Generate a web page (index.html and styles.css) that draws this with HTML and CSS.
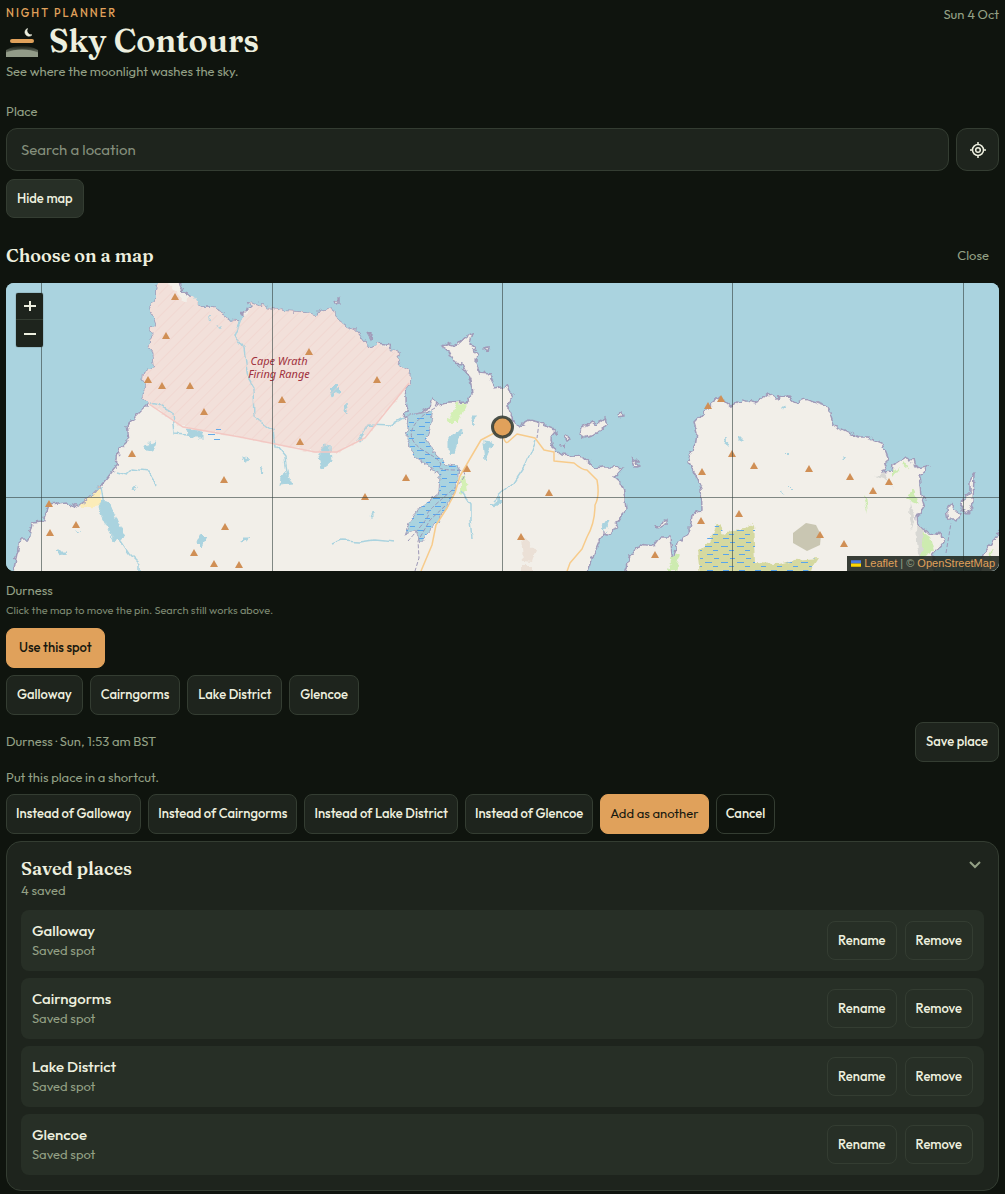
FILE: index.html
```html
<!DOCTYPE html>
<html lang="en">
<head>
<meta charset="utf-8">
<meta name="viewport" content="width=device-width, initial-scale=1">
<title>Sky Contours</title>
<link rel="stylesheet" href="styles.css">
</head>
<body>
<main class="page">
  <header class="top">
    <div>
      <p class="eyebrow">Night planner</p>
      <div class="brand">
        <svg class="logo" viewBox="0 0 32 32" aria-hidden="true">
          <defs>
            <linearGradient id="haze" x1="0" y1="0" x2="0" y2="1">
              <stop offset="0" stop-color="#929b88" stop-opacity="0"/>
              <stop offset="1" stop-color="#929b88" stop-opacity=".9"/>
            </linearGradient>
          </defs>
          <path d="M21.500 3.500a4 4 0 1 0 4.500 6.300a4.300 4.300 0 0 1-4.500-6.300z" fill="#edefdf" stroke="#edefdf" stroke-width=".6"/>
          <rect x="4" y="14" width="24" height="4" rx="2" fill="#e0a15b"/>
          <path d="M0 25Q8 20.500 16 20.500T32 25V29H0z" fill="url(#haze)"/>
          <path d="M0 27.500Q7 24.500 16 24.500T32 27.500V32H0z" fill="#929b88"/>
        </svg>
        <h1>Sky Contours</h1>
      </div>
      <p class="text tagline">See where the moonlight washes the sky.</p>
    </div>
    <time class="text" datetime="10-04">Sun 4 Oct</time>
  </header>

  <section class="place">
    <label class="text" for="search">Place</label>
    <div class="search">
      <input id="search" type="search" placeholder="Search a location">
      <button class="locate" type="button" aria-label="Use my location">
        <svg viewBox="0 0 18 18" fill="none" stroke="#edefdf" stroke-width="1.500" aria-hidden="true">
          <circle cx="9" cy="9" r="5.500"/><circle cx="9" cy="9" r="2.300"/>
          <path d="M9 1v2.500M9 14.500V17M1 9h2.500M14.500 9H17"/>
        </svg>
      </button>
    </div>
    <button class="btn raised" type="button">Hide map</button>
  </section>

  <section class="picker">
    <div class="picker-head">
      <h2>Choose on a map</h2>
      <button class="close text" type="button">Close</button>
    </div>
    <div class="map">
      <svg class="tiles" viewBox="6 283 993 288" preserveAspectRatio="xMidYMid slice" role="img" aria-label="Map around Durness">
        <defs>
          <filter id="rough" x="-2%" y="-2%" width="104%" height="104%">
            <feTurbulence type="fractalNoise" baseFrequency=".16" numOctaves="2" seed="4"/>
            <feDisplacementMap in="SourceGraphic" scale="7" xChannelSelector="R" yChannelSelector="G"/>
          </filter>
          <filter id="wavy" x="-2%" y="-2%" width="104%" height="104%">
            <feTurbulence type="fractalNoise" baseFrequency=".08" numOctaves="1" seed="9"/>
            <feDisplacementMap in="SourceGraphic" scale="9" xChannelSelector="R" yChannelSelector="G"/>
          </filter>
          <pattern id="hatch" width="8" height="8" patternUnits="userSpaceOnUse" patternTransform="rotate(45)">
            <path d="M0 0V8" stroke="#f0cfc9" stroke-width="1"/>
          </pattern>
          <pattern id="marsh" width="16" height="16" patternUnits="userSpaceOnUse">
            <path d="M1 2.500h7M9 6.500h5M3 10.500h6M10 14.500h5" stroke="#58a5ed" stroke-width="1"/>
          </pattern>
          <path id="peak" d="M0-4L4 3H-4z" fill="#d08f55"/>
        </defs>
        <rect x="6" y="283" width="993" height="288" fill="#aad3df"/>
        <g filter="url(#rough)">
          <g fill="#f2efe9" stroke="#a09bb9" stroke-width="1.500">
            <path d="M14 580L14 571 16 558 20 540 28 540 32 523 43 522 49 505 67 503 77 507 90 497 103 483 116 467 118 450 129 440 127 425 135 417 149 403 142 398 147 387 143 380 144 372 155 368 153 352 149 347 153 338 150 330 156 325 150 307 156 298 156 290 160 276H178L180 285 183 292 190 295 200 307 213 307 223 312 227 320 240 321 247 318 242 313 252 307 250 302 265 307 283 311 300 312 317 315 320 311 332 308 338 320 347 327 355 330 370 349 377 347 377 343 385 344 393 350 400 355 395 358 403 367 410 372 409 383 405 390 407 408 404 418 420 413 430 407 433 398 437 405 448 403 467 402 472 393 470 380 462 363 453 362 447 350 442 346 450 343 457 345 467 336 473 333 470 343 477 353 476 363 480 373 490 374 495 388 507 386 512 395 507 407 513 420 518 427 530 420 538 422 553 428 556 432 551 438 553 448 562 455 583 457 595 468 602 467 613 467 623 468 615 477 622 483 625 498 626 510 610 535 603 533 595 552 585 580z"/>
            <path d="M625 580L625 571 628 558 640 544 653 546 660 537 670 537 673 562 677 543 690 530 692 515 702 510 701 488 688 460 695 447 697 432 694 422 707 408 720 397 732 407 742 400 755 403 768 393 775 398 788 397 795 403 805 399 822 405 828 407 834 425 858 437 868 437 882 443 888 458 883 473 892 472 893 465 905 457 913 460 915 468 928 466 920 475 922 495 925 505 917 517 918 525 928 533 942 535 944 542 933 555 935 580z"/>
            <path d="M947 510L951 503 954 510 960 513 957 520 949 520zM961 510L963 498 970 493 970 478 974 474 973 503 968 514zM1005 525L992 542 983 555 978 580H1005z"/>
            <path d="M580 435L582 427 592 422 596 425 605 418 608 425 597 433 585 437zM618 415l4-3 1 4-4 1zM565 438l3-2 1 3-3 1zM562 446l2-2v4zM633 459l3 2 3 5-3 1zM656 526l9-4 2-2v5l-9 3zM335 302l3-2v3l-2 1zM367 332l5 5-1 2zM483 348l6-1-1 4z"/>
          </g>
          <path d="M167 276L167 283 183 301 193 296 200 307 213 307 223 312 227 320 240 321 252 307 250 302 265 307 283 311 300 312 317 315 320 311 332 308 338 320 347 327 355 330 370 349 377 347 377 343 393 350 400 355 395 358 403 367 410 372 409 383 365 438 337 452 315 452 240 437 183 427 149 404 142 398 147 387 143 380 144 372 155 368 153 352 149 347 153 338 150 330 156 325 150 307 156 298 156 290 160 276z" fill="#f2e0da"/>
          <path d="M100 486L103 505 90 508 79 506 90 497z" fill="#fbecb8"/>
          <path d="M456 404L467 403 458 423 448 423zM465 475l2 17-6 2v-15z" fill="#d4f0b5"/>
          <path d="M912 490l8 14-14-6zM892 470l8-3-8 10zM904 462l6 8-8-6zM866 495l2 18-4-14zM920 530l10 7 4 14-12 7zM680 553l-5 18h-7l4-14zM985 562l9-14-5 16z" fill="#cdebb0"/>
          <path d="M717 523L725 534 733 530 745 529 753 523 755 563 778 564 795 560 819 558 808 575H700l-3-25 12-7z" fill="#d5d9a0"/>
          <path d="M521 536l15 14-4 12-9-1zM522 566h12v9h-12z" fill="#ebe0d6"/>
          <path d="M916 526l8 4-2 27-4-3zM873 476l12-2 9 14-8-8zM910 500l5 18-3 12-3-12z" fill="#d8d8d4"/>
        </g>
        <path d="M793 533L806 523 816 525 821 535 820 545 807 551 793 543z" fill="#c9c6b2"/>
        <g filter="url(#rough)">
          <path d="M409 416L433 410 430 428 426 440 436 455 446 464 459 467 457 486 446 508 436 523 428 533 420 543 416 530 405 535 409 523 420 508 439 493 440 475 427 465 413 455 407 438z" fill="#aad3df" stroke="#a7a3bd"/>
          <path d="M98 507Q105 497 110 505L124 537 115 542 103 518zM324 444l6 3 1 14-9 8-3-12zM449 437l13-7-8 22-5 1zM483 442l9 1-7 17zM146 445l10-3-3 10-6-1zM201 533l5 5-4 9-5-5zM281 478l4-8 7 14-12 1zM330 390l5-5 5 5-8 6zM187 430l15 1v6h-12zM603 523l6-2-5 10zM491 504l8-6 3 3-8 6zM471 416l4 0-1 10zM346 405l2 8-3-3zM56 551l10 0-7 5zM243 538l7 0-8 4zM132 490l5-4-4 6zM242 457l7 2-5 2zM260 466l5 7-2 1zM371 516l3-4v4zM725 444l2-8 1 12zM739 436h2v6h-2zM844 456l3 1-3 3zM784 406l3 2-3 2zM783 451l4 4M780 490l4 3M788 486l4 4M208 320l3-4M218 325l2 5M75 530l6 2" fill="#aad3df" stroke="#aad3df"/>
        </g>
        <g fill="none" stroke="#aad3df" stroke-width="1.500" stroke-linejoin="round" filter="url(#wavy)">
          <path d="M150 403l9 2 13 8 2 21 16 1M116 471l11 3 6-6 15 2 10 15M102 487l3 18M121 541l8 12 11 11v7M240 320l-6 15 10 14 4 30 6 10 1 29 18 13 2 15 10 12 3 18M403 419l-12 7-22-1-11 17M332 545l10-4 18 1 14-2 20 2M461 492l9 12v15l2 20M535 440l-10 24-12 18-20 18"/>
        </g>
        <path d="M149 404L183 427 240 437 315 452H337L365 438 409 383V372L403 367 395 358 400 355 377 343 370 349 338 320 332 308 317 315 252 303 240 321 227 320 200 307 183 301 167 283H160L156 325 153 352 155 368 144 372z" fill="url(#hatch)"/>
        <path d="M149 404L183 427 240 437 315 452H337L365 438 409 383" fill="none" stroke="#f3c8c3" stroke-width="1.500"/>
        <path d="M409 416L433 410 430 428 426 440 436 455 446 464 459 467 457 486 446 508 436 523 420 543 416 530 405 535 409 523 420 508 439 493 440 475 427 465 413 455 407 438zM717 523L725 534 733 530 745 529 755 526V563L778 564 819 558 808 571H700V550z" fill="url(#marsh)"/>
        <path d="M208 434.500h7M216 429.500h5M214 439.500h6" stroke="#63a9e8"/>
        <path d="M435 408Q416 418 412 430T426 452 440 466 456 470 450 492 428 514 408 541M445 506L430 520 418 541 419 558 415 571M946 553l5-30M457 365l12 10 4 20M539 423l-2 15" fill="none" stroke="#9d98b7" stroke-dasharray="4 2"/>
        <path d="M421 571L432 545 436 525 447 508 455 493 460 476 471 457 481 440 502 429M502 429q2 16 6 13l9-8 18 4 9 12 10 2v9l20 2q8 7 13 7l10 10q3 16-2 25 0 18-8 32l-5 12-12 14-5 14" fill="none" stroke="#f7cb8b" stroke-width="1.500" stroke-linejoin="round"/>
        <g>
          <use href="#peak" x="175" y="297"/><use href="#peak" x="166" y="336"/><use href="#peak" x="148" y="380"/><use href="#peak" x="162" y="386"/><use href="#peak" x="190" y="386"/><use href="#peak" x="204" y="412"/><use href="#peak" x="132" y="454"/><use href="#peak" x="309" y="352"/><use href="#peak" x="282" y="400"/><use href="#peak" x="377" y="380"/><use href="#peak" x="300" y="442"/><use href="#peak" x="224" y="480"/><use href="#peak" x="49" y="504"/><use href="#peak" x="76" y="525"/><use href="#peak" x="50" y="533"/><use href="#peak" x="194" y="553"/><use href="#peak" x="214" y="564"/><use href="#peak" x="239" y="565"/><use href="#peak" x="225" y="527"/><use href="#peak" x="365" y="497"/><use href="#peak" x="406" y="478"/><use href="#peak" x="467" y="469"/><use href="#peak" x="549" y="493"/><use href="#peak" x="521" y="537"/><use href="#peak" x="655" y="555"/><use href="#peak" x="708" y="406"/><use href="#peak" x="721" y="399"/><use href="#peak" x="732" y="454"/><use href="#peak" x="702" y="472"/><use href="#peak" x="701" y="521"/><use href="#peak" x="739" y="514"/><use href="#peak" x="754" y="466"/><use href="#peak" x="809" y="469"/><use href="#peak" x="850" y="477"/><use href="#peak" x="873" y="491"/><use href="#peak" x="889" y="482"/><use href="#peak" x="820" y="535"/><use href="#peak" x="844" y="544"/>
        </g>
        <g class="map-label"><text x="279" y="365">Cape Wrath</text><text x="279" y="378">Firing Range</text></g>
        <path d="M41.500 283V571M272.500 283V571M502.500 283V571M732.500 283V571M963.500 283V571M6 497.500H999" stroke="#34413f" stroke-opacity=".6"/>
        <circle cx="502.500" cy="427" r="10" fill="#e0a15b" stroke="#333c35" stroke-opacity=".88" stroke-width="3"/>
      </svg>
      <div class="zoom">
        <button type="button" aria-label="Zoom in"><svg viewBox="0 0 12 12" aria-hidden="true"><path d="M6 1V11M0 6H12"/></svg></button>
        <button type="button" aria-label="Zoom out"><svg viewBox="0 0 12 12" aria-hidden="true"><path d="M0 6H12"/></svg></button>
      </div>
      <div class="credit">
        <a href="#leaflet"><svg viewBox="0 0 12 8" aria-hidden="true"><path fill="#4c7be1" d="M0 0h12v4H0z"/><path fill="#ffd500" d="M0 4h12v4H0z"/></svg>Leaflet</a> | © <a href="#osm">OpenStreetMap</a>
      </div>
    </div>
    <p class="text spot">Durness</p>
    <p class="hint">Click the map to move the pin. Search still works above.</p>
    <button class="btn accent use" type="button">Use this spot</button>
  </section>

  <div class="chips">
    <button class="btn" type="button">Galloway</button>
    <button class="btn" type="button">Cairngorms</button>
    <button class="btn" type="button">Lake District</button>
    <button class="btn" type="button">Glencoe</button>
  </div>
  <div class="current">
    <p class="text">Durness · Sun, 1:53 am BST</p>
    <button class="btn" type="button">Save place</button>
  </div>
  <p class="text shortcut">Put this place in a shortcut.</p>
  <div class="chips choices">
    <button class="btn" type="button">Instead of Galloway</button>
    <button class="btn" type="button">Instead of Cairngorms</button>
    <button class="btn" type="button">Instead of Lake District</button>
    <button class="btn" type="button">Instead of Glencoe</button>
    <button class="btn accent add" type="button">Add as another</button>
    <button class="btn clear" type="button">Cancel</button>
  </div>

  <details class="saved" open>
    <summary>
      <span><span class="saved-title">Saved places</span><span class="text saved-count">4 saved</span></span>
      <svg class="chevron" viewBox="0 0 12 8" aria-hidden="true"><path d="M1 1l5 5 5-5"/></svg>
    </summary>
    <ul>
      <li><div><p class="name">Galloway</p><p class="text">Saved spot</p></div><button class="btn clear" type="button">Rename</button><button class="btn clear" type="button">Remove</button></li>
      <li><div><p class="name">Cairngorms</p><p class="text">Saved spot</p></div><button class="btn clear" type="button">Rename</button><button class="btn clear" type="button">Remove</button></li>
      <li><div><p class="name">Lake District</p><p class="text">Saved spot</p></div><button class="btn clear" type="button">Rename</button><button class="btn clear" type="button">Remove</button></li>
      <li><div><p class="name">Glencoe</p><p class="text">Saved spot</p></div><button class="btn clear" type="button">Rename</button><button class="btn clear" type="button">Remove</button></li>
    </ul>
  </details>
</main>
</body>
</html>
```
FILE: styles.css
```css
:root {
  --bg: #0f140e;
  --panel: #1e241d;
  --raised: #272f26;
  --line: #343d32;
  --ink: #edefdf;
  --muted: #93a085;
  --accent: #e0a15b;
  --sans: Outfit, Lato, "Open Sans", sans-serif;
  --serif: Fraunces, "DejaVu Serif", serif;
}
* { box-sizing: border-box; }
body { margin: 0; background: var(--bg); color: var(--ink); font-family: var(--sans); font-size: 13px; line-height: 20px; }
h1, h2, p, ul { margin: 0; padding: 0; }
button, input { font: inherit; color: inherit; }
button { cursor: pointer; }
.page { padding: 4px 6px 2px; }
.text { color: var(--muted); font-size: 13px; line-height: 20px; }
.top { display: flex; justify-content: space-between; align-items: flex-start; }
.eyebrow { color: var(--accent); font-size: 11px; line-height: 18px; font-weight: 500; letter-spacing: 2px; text-transform: uppercase; }
.brand { display: flex; align-items: center; gap: 11px; height: 38px; }
.logo { width: 32px; height: 32px; }
h1 { font: 600 32px/38px var(--serif); }
.tagline { margin-top: 1px; }
.place { margin-top: 20px; }
.place label { display: block; }
.search { display: flex; gap: 7px; margin: 7px 0 8px; }
.search input { flex: 1; min-width: 0; height: 43px; padding: 0 14px; font-size: 15px; background: var(--panel); border: 1px solid var(--line); border-radius: 11px; appearance: none; }
.search input::placeholder { color: #858f7c; opacity: 1; }
.locate { width: 43px; height: 43px; padding: 0; display: grid; place-items: center; background: var(--panel); border: 1px solid var(--line); border-radius: 11px; }
.locate svg { width: 18px; height: 18px; }
.btn { height: 40px; padding: 0 10px 2px; background: var(--panel); border: 1px solid var(--line); border-radius: 8px; font-weight: 500; white-space: nowrap; }
.raised { height: 39px; background: var(--raised); }
.accent { background: var(--accent); border-color: var(--accent); color: #17180f; }
.add { font-weight: 400; }
.clear { background: transparent; }
.picker { margin-top: 24px; }
.picker-head { display: flex; justify-content: space-between; align-items: center; height: 28px; margin-bottom: 13px; }
h2, .saved-title { font: 600 18px/24px var(--serif); }
.close { padding: 0 10px 2px; border: 0; background: none; }
.map { position: relative; height: 288px; overflow: hidden; border-radius: 8px; background: #aad3df; }
.tiles { display: block; width: 100%; height: 100%; }
.map-label { font: italic 11px "Noto Sans", sans-serif; fill: #a0303c; text-anchor: middle; }
.zoom { position: absolute; left: 10px; top: 10px; width: 27px; overflow: hidden; border-radius: 2px; box-shadow: 0 0 1px #111; }
.zoom button { display: grid; place-items: center; width: 27px; height: 27px; padding: 0; border: 0; background: var(--panel); }
.zoom button:first-child { border-bottom: 1px solid var(--line); }
.zoom svg { width: 12px; height: 12px; stroke: var(--ink); stroke-width: 2; }
.credit { position: absolute; right: 0; bottom: 0; padding: 0 4px; background: rgba(30, 36, 29, .88); color: var(--muted); font: 11px/15px "Liberation Sans", sans-serif; }
.credit a { color: var(--accent); text-decoration: none; }
.credit svg { width: 10px; height: 7px; margin-right: 3px; }
.spot { margin-top: 9px; }
.hint { margin-top: 1px; color: #7c8871; font-size: 11px; line-height: 18px; }
.use { margin-top: 9px; padding: 0 12px 2px; }
.chips { display: flex; flex-wrap: wrap; gap: 7px; margin-top: 7px; }
.choices .btn { padding: 0 9px 2px; }
.current { display: flex; justify-content: space-between; align-items: center; margin-top: 7px; }
.current .text { padding-bottom: 2px; }
.shortcut { margin-top: 5px; }
.saved { margin-top: 7px; padding: 15px 14px; border: 1px solid var(--line); border-radius: 15px; background: var(--panel); }
.saved summary { display: flex; justify-content: space-between; align-items: flex-start; list-style: none; cursor: pointer; }
.saved-title, .saved-count { display: block; }
.saved-title { line-height: 23px; }
.chevron { width: 12px; height: 8px; margin: 4px 3px; fill: none; stroke: var(--muted); stroke-width: 2; }
.saved ul { display: grid; gap: 7px; margin-top: 10px; list-style: none; }
.saved li { display: flex; align-items: center; gap: 8px; padding: 11px; border-radius: 8px; background: var(--raised); }
.saved li div { flex: 1; }
.saved li .btn { height: 39px; }
.name { font-size: 15px; line-height: 19px; font-weight: 500; }
```
